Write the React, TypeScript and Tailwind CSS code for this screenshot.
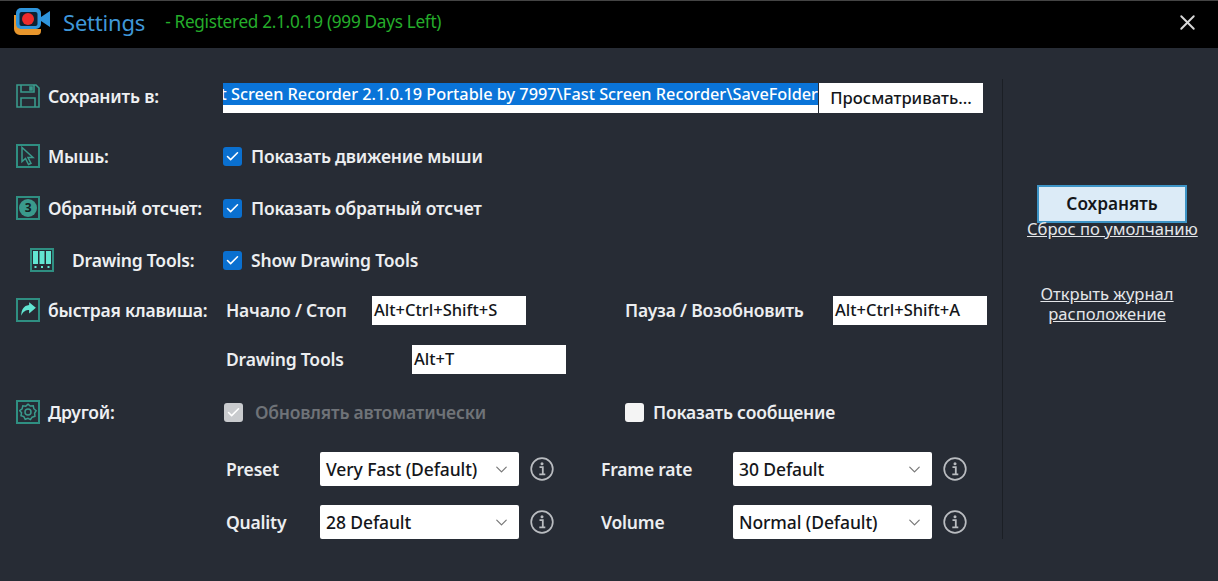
import { Check, ChevronDown, X } from "lucide-react";
import type { ReactNode } from "react";

const font = { fontFamily: '"Noto Sans", "Open Sans", sans-serif' };

function IconBox({ children, className = "" }: { children: ReactNode; className?: string }) {
  return (
    <div className={`w-6 h-6 shrink-0 border-2 border-[#2f8f82] flex items-center justify-center ${className}`}>
      {children}
    </div>
  );
}

function Label({ icon, text }: { icon: ReactNode; text: string }) {
  return (
    <div className="w-[223px] shrink-0 pl-4 flex items-center gap-2 text-[17.5px] font-semibold text-[#eef0f2] whitespace-nowrap tracking-[-0.2px]">
      {icon}
      <span>{text}</span>
    </div>
  );
}

function CheckBox({ checked = true, disabled = false }: { checked?: boolean; disabled?: boolean }) {
  let color = "bg-[#0a70d0]";
  if (disabled) color = "bg-[#c9cbce]";
  if (!checked) color = "bg-[#f4f4f4]";
  return (
    <div className={`w-[19px] h-[19px] rounded-[3px] flex items-center justify-center shrink-0 ${color}`}>
      {checked && <Check size={15} strokeWidth={2.5} className="text-white" />}
    </div>
  );
}

function Info() {
  return (
    <svg width="24" height="24" viewBox="0 0 24 24" fill="none" className="shrink-0">
      <circle cx="12" cy="12" r="10.8" stroke="#b9bcc0" strokeWidth="1.7" />
      <circle cx="12" cy="6.8" r="1.5" fill="#b9bcc0" />
      <path d="M9.5 10.2h3.3v7M9.3 17.4h6" stroke="#b9bcc0" strokeWidth="1.8" />
    </svg>
  );
}

function Select({ value }: { value: string }) {
  return (
    <div className="w-[199px] h-[34px] bg-white rounded-[2px] pl-1.5 pr-2 flex items-center justify-between text-[17.5px] font-medium text-[#14161a] tracking-[-0.1px]">
      <span>{value}</span>
      <ChevronDown size={19} strokeWidth={1.5} className="text-[#777]" />
    </div>
  );
}

function HotKey({ value }: { value: string }) {
  return (
    <div className="w-[154px] h-[29px] bg-white pl-0.5 flex items-center text-[16.5px] font-medium text-[#14161a] whitespace-nowrap">
      {value}
    </div>
  );
}

const settingText = "text-[17.5px] font-semibold text-[#eceef0] tracking-[-0.2px] whitespace-nowrap";

export default function App() {
  return (
    <div style={font} className="w-[1218px] h-[581px] bg-[#272c35] flex flex-col overflow-hidden">
      <header className="h-[48px] shrink-0 bg-black border-t border-[#444] flex items-center pl-[13px] pr-[18px] pb-[5px]">
        <svg width="38" height="28" viewBox="0 0 38 28" fill="none" className="shrink-0">
          <path d="M1 7v14a6 6 0 0 0 6 6h17a4 4 0 0 0 4-4v-2H9a2 2 0 0 1-2-2V7z" fill="#e8962c" />
          <rect x="3" y="0" width="25" height="21" rx="5" fill="#2f95dc" />
          <rect x="6.500" y="4" width="18" height="14" rx="2" fill="#0e2233" />
          <circle cx="15" cy="11" r="6" fill="#ee2b2b" />
          <path d="M28 9l9-6v16l-9-6z" fill="#2f95dc" />
        </svg>
        <span className="ml-[12px] text-[22px] text-[#3f97d8] tracking-[-0.2px]">Settings</span>
        <span className="ml-[20px] text-[17.2px] text-[#25ad2b] tracking-[-0.3px]">- Registered 2.1.0.19 (999 Days Left)</span>
        <X size={25} strokeWidth={1.8} className="ml-auto text-[#d8d8d8]" />
      </header>

      <div className="flex-1 flex min-h-0">
        <main className="w-[1003px] shrink-0 border-r border-[#1b1f25] mt-[31px] mb-[42px]">
          <div className="h-[34px] flex items-center">
            <Label
              text="Сохранить в:"
              icon={
                <svg width="24" height="24" viewBox="0 0 24 24" fill="none" stroke="#3a9a8c" strokeWidth="1.6">
                  <path d="M1 1h19l3 3v19H1z" />
                  <path d="M5 1v7h13V1M5 23v-9h14v9" />
                  <path d="M14 3h2v3h-2z" fill="#3a9a8c" />
                </svg>
              }
            />
            <div className="self-end h-[30px] w-[595px] bg-white overflow-hidden flex justify-end items-start">
              <span className="shrink-0 bg-[#0a74d8] text-white text-[16.3px] font-medium leading-[22px] whitespace-nowrap">
                Fast Screen Recorder 2.1.0.19 Portable by 7997\Fast Screen Recorder\SaveFolder
              </span>
            </div>
            <div className="self-end ml-px w-[164px] h-[30px] bg-white flex items-center justify-center text-[16.6px] font-medium text-[#14161a] whitespace-nowrap">
              Просматривать...
            </div>
          </div>

          <div className="mt-[26px] h-[34px] flex items-center">
            <Label
              text="Мышь:"
              icon={
                <IconBox>
                  <svg width="20" height="20" viewBox="0 0 20 20" fill="none" stroke="#3a9a8c" strokeWidth="1.5">
                    <path d="M4 1.500v14l3.500-3 3 6 2.500-1.200-3-5.800H15z" />
                  </svg>
                </IconBox>
              }
            />
            <div className="flex items-center gap-[9px]">
              <CheckBox />
              <span className={settingText}>Показать движение мыши</span>
            </div>
          </div>

          <div className="mt-[18px] h-[34px] flex items-center">
            <Label
              text="Обратный отсчет:"
              icon={
                <IconBox>
                  <div className="w-[18px] h-[18px] rounded-full bg-[#3a9a8c] flex items-center justify-center text-[12px] font-bold text-[#12211f]">
                    3
                  </div>
                </IconBox>
              }
            />
            <div className="flex items-center gap-[9px]">
              <CheckBox />
              <span className={settingText}>Показать обратный отсчет</span>
            </div>
          </div>

          <div className="mt-[18px] h-[34px] flex items-center">
            <div className="w-[223px] shrink-0 pl-[30px] flex items-center gap-[18px] text-[17.5px] font-semibold text-[#eef0f2] whitespace-nowrap tracking-[-0.2px]">
              <IconBox>
                <svg width="20" height="20" viewBox="0 0 20 20" fill="#62e6d2">
                  <path d="M1 1h5v13H1zM7.500 1h5v13h-5zM14 1h5v13h-5z" />
                  <path d="M2.500 16h2v2h-2zM9 16h2v2H9zM15.500 16h2v2h-2z" />
                </svg>
              </IconBox>
              <span>Drawing Tools:</span>
            </div>
            <div className="flex items-center gap-[9px]">
              <CheckBox />
              <span className={settingText}>Show Drawing Tools</span>
            </div>
          </div>

          <div className="mt-[16px] h-[34px] flex items-center">
            <Label
              text="быстрая клавиша:"
              icon={
                <IconBox>
                  <svg width="18" height="18" viewBox="0 0 16 16" fill="#62e6d2">
                    <path d="M9 1l6 5-6 5V8C6 8 4 9 2 13c0-5 2-9 7-9.500z" />
                  </svg>
                </IconBox>
              }
            />
            <div className="w-[3px] shrink-0" />
            <span className={`w-[146px] ${settingText}`}>Начало / Стоп</span>
            <HotKey value="Alt+Ctrl+Shift+S" />
            <span className={`ml-[99px] w-[208px] ${settingText}`}>Пауза / Возобновить</span>
            <HotKey value="Alt+Ctrl+Shift+A" />
          </div>

          <div className="mt-[15px] h-[34px] flex items-center pl-[226px]">
            <span className={`w-[186px] ${settingText}`}>Drawing Tools</span>
            <HotKey value="Alt+T" />
          </div>

          <div className="mt-[19px] h-[34px] flex items-center">
            <Label
              text="Другой:"
              icon={
                <IconBox>
                  <svg width="18" height="18" viewBox="0 0 24 24" fill="none" stroke="#3a9a8c" strokeWidth="2">
                    <path d="M12 1.500l3 2.500 4-.3.800 3.900 3 2.700-2 3.400.5 4-3.800 1.200-2.200 3.300-3.300-1.700-3.700 1.200-1.900-3.500-3.700-1.300.7-4L1 10.300l3.200-2.600.9-3.900 3.900.4z" />
                    <circle cx="12" cy="12" r="4" />
                  </svg>
                </IconBox>
              }
            />
            <div className="ml-[1px] w-[401px] flex items-center gap-[12px]">
              <CheckBox disabled />
              <span className="text-[17.5px] font-semibold text-[#6f7378] tracking-[-0.2px] whitespace-nowrap">
                Обновлять автоматически
              </span>
            </div>
            <div className="flex items-center gap-[9px]">
              <CheckBox checked={false} />
              <span className={settingText}>Показать сообщение</span>
            </div>
          </div>

          <div className="mt-[23px] h-[34px] flex items-center pl-[226px]">
            <span className={`w-[94px] ${settingText}`}>Preset</span>
            <Select value="Very Fast (Default)" />
            <div className="ml-[11px]"><Info /></div>
            <span className={`ml-[47px] w-[132px] ${settingText}`}>Frame rate</span>
            <Select value="30 Default" />
            <div className="ml-[11px]"><Info /></div>
          </div>

          <div className="mt-[19px] h-[34px] flex items-center pl-[226px]">
            <span className={`w-[94px] ${settingText}`}>Quality</span>
            <Select value="28 Default" />
            <div className="ml-[11px]"><Info /></div>
            <span className={`ml-[47px] w-[132px] ${settingText}`}>Volume</span>
            <Select value="Normal (Default)" />
            <div className="ml-[11px]"><Info /></div>
          </div>
        </main>

        <aside className="flex-1 flex flex-col pt-[137px] text-[#e4e6e9] text-[16.6px]">
          <div className="ml-[34px] w-[150px] h-[38px] bg-[#dcebf7] border-2 border-[#3d94c6] flex items-center justify-center text-[17.3px] font-semibold text-[#14161a]">
            Сохранять
          </div>
          <a className="ml-[24px] leading-[16px] mt-[-2px] underline whitespace-nowrap">Сброс по умолчанию</a>
          <a className="mt-[47px] ml-[6px] w-[196px] text-center leading-[20px] underline">
            Открыть журнал
            <br />
            расположение
          </a>
        </aside>
      </div>
    </div>
  );
}
